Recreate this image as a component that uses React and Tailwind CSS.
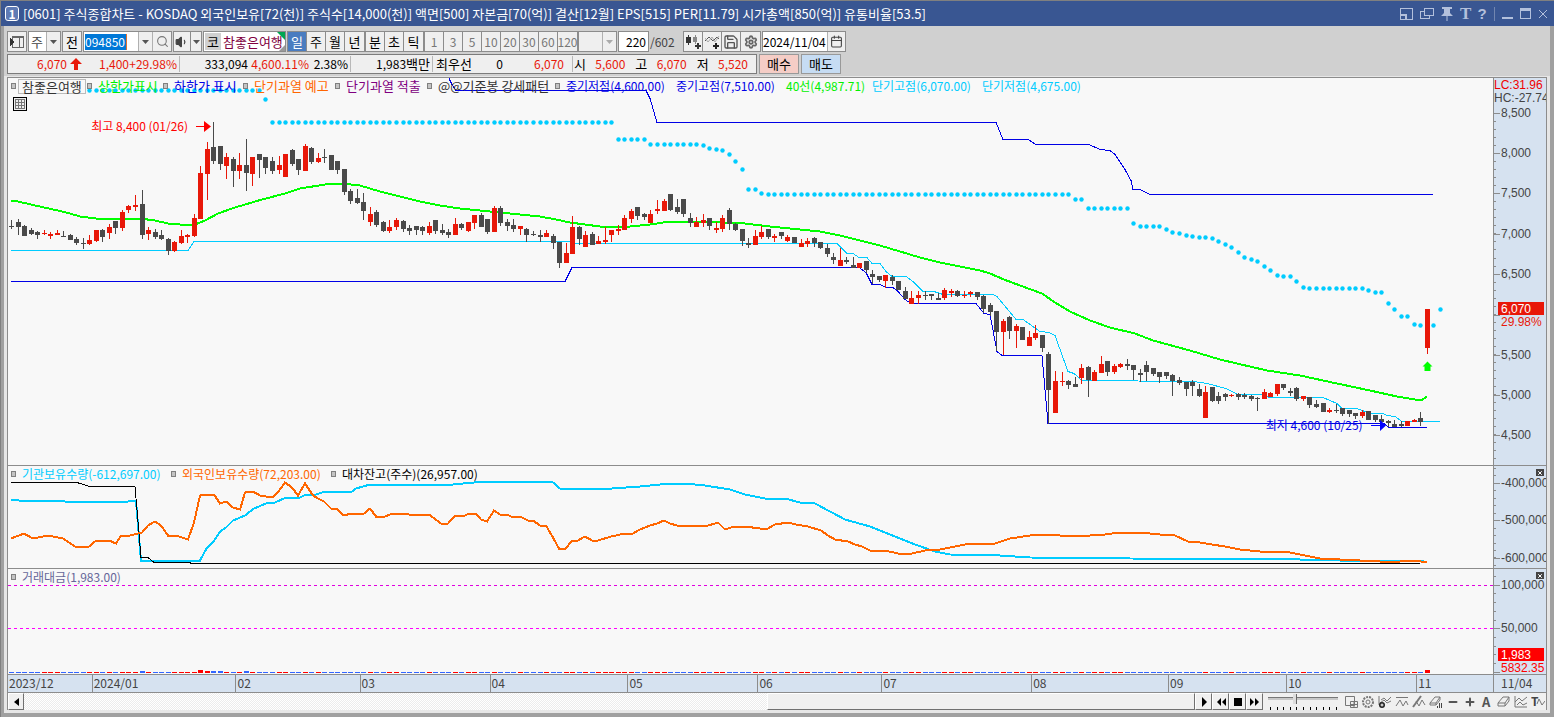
import { Search, Save, Settings, Calendar, Volume1, Minus, Plus, X } from 'lucide-react'
import clsx from 'clsx'

const RED = '#e81809'
const DARK = '#4a4a4a'
const CYAN = '#00ccff'
const BLUE = '#0000e6'
const STEP = 6.525

// [high, bodyTop, bodyBottom, low, rising]
const CANDLES = [
  [220, 226, 227, 229, 0], [219, 222, 227, 235, 0], [225, 226, 236, 236, 0], [228, 230, 234, 235, 0], [231, 232, 235, 239, 0],
  [230, 233, 234, 235, 1], [232, 234, 236, 239, 1], [230, 233, 235, 235, 1], [231, 236, 237, 237, 0], [234, 235, 240, 240, 0],
  [237, 239, 243, 245, 0], [238, 243, 244, 249, 0], [235, 240, 244, 245, 1], [230, 230, 241, 242, 1], [229, 230, 237, 242, 0],
  [224, 227, 233, 239, 1], [221, 221, 228, 234, 0], [210, 212, 228, 231, 1], [205, 206, 210, 213, 1], [195, 205, 207, 211, 1],
  [190, 204, 235, 239, 0], [227, 230, 234, 240, 1], [229, 232, 237, 239, 0], [230, 235, 239, 240, 0], [238, 239, 251, 255, 0],
  [241, 242, 251, 252, 1], [230, 236, 243, 244, 1], [234, 235, 237, 243, 1], [214, 218, 236, 237, 1], [166, 173, 219, 219, 1],
  [142, 149, 174, 200, 1], [122, 147, 161, 164, 0], [146, 146, 164, 170, 0], [153, 157, 166, 179, 1], [157, 159, 171, 187, 0],
  [153, 165, 171, 179, 1], [139, 165, 173, 191, 0], [157, 157, 174, 186, 1], [154, 154, 160, 178, 0], [157, 157, 168, 174, 0],
  [157, 161, 171, 174, 0], [156, 165, 170, 174, 1], [154, 154, 177, 177, 1], [149, 150, 164, 166, 0], [159, 159, 170, 175, 0],
  [144, 146, 171, 171, 1], [147, 148, 162, 164, 0], [153, 158, 162, 163, 1], [149, 157, 158, 163, 0], [155, 155, 170, 170, 0],
  [161, 161, 170, 174, 0], [169, 169, 192, 195, 0], [189, 191, 201, 204, 0], [189, 198, 203, 204, 0], [193, 202, 211, 220, 0],
  [207, 214, 222, 226, 1], [210, 212, 225, 227, 0], [221, 222, 231, 232, 0], [220, 227, 231, 233, 1], [218, 220, 227, 230, 1],
  [220, 221, 229, 232, 0], [225, 228, 231, 235, 0], [226, 226, 230, 235, 0], [226, 227, 231, 235, 0], [222, 226, 233, 235, 1],
  [220, 220, 231, 234, 0], [224, 230, 233, 235, 0], [229, 232, 235, 238, 0], [218, 224, 235, 235, 1], [223, 224, 228, 230, 0],
  [222, 222, 231, 232, 1], [215, 215, 223, 229, 1], [213, 215, 227, 227, 0], [219, 219, 232, 234, 0], [206, 208, 232, 232, 1],
  [206, 208, 223, 226, 0], [219, 222, 226, 231, 0], [219, 225, 229, 232, 0], [226, 226, 229, 235, 1], [228, 229, 235, 242, 0],
  [231, 234, 235, 236, 0], [230, 235, 237, 242, 0], [230, 233, 237, 237, 1], [234, 236, 243, 249, 0], [242, 242, 263, 268, 0],
  [243, 253, 263, 263, 1], [216, 227, 254, 254, 1], [226, 227, 239, 245, 0], [231, 235, 247, 247, 1], [232, 234, 245, 245, 0],
  [236, 241, 244, 244, 1], [227, 240, 242, 244, 1], [230, 230, 235, 242, 1], [225, 229, 231, 235, 1], [215, 218, 230, 230, 1],
  [209, 211, 219, 223, 1], [207, 207, 216, 220, 0], [213, 214, 217, 220, 0], [210, 214, 223, 223, 1], [200, 209, 211, 214, 1],
  [199, 201, 211, 211, 1], [194, 194, 210, 211, 0], [199, 207, 212, 214, 0], [199, 199, 214, 217, 0], [213, 218, 223, 227, 0],
  [217, 222, 227, 227, 1], [214, 220, 223, 227, 1], [218, 218, 226, 230, 0], [222, 228, 230, 233, 1], [215, 218, 229, 232, 1],
  [208, 210, 224, 230, 0], [223, 224, 230, 231, 0], [229, 229, 241, 246, 0], [238, 243, 245, 248, 0], [230, 236, 245, 245, 1],
  [226, 232, 237, 239, 1], [229, 229, 237, 239, 0], [234, 236, 238, 242, 1], [232, 232, 236, 239, 0], [235, 237, 241, 242, 1],
  [237, 237, 243, 243, 0], [239, 243, 247, 247, 1], [238, 241, 244, 247, 1], [237, 238, 243, 247, 0], [242, 242, 248, 249, 0],
  [244, 248, 254, 257, 0], [253, 257, 260, 264, 0], [248, 260, 266, 266, 1], [257, 260, 262, 264, 0], [257, 265, 268, 268, 0],
  [263, 263, 268, 268, 1], [261, 261, 270, 273, 0], [270, 274, 277, 284, 0], [276, 276, 280, 282, 0], [275, 275, 281, 288, 1],
  [275, 277, 281, 285, 0], [281, 281, 290, 290, 0], [287, 291, 299, 299, 0], [291, 298, 304, 304, 1], [291, 295, 298, 304, 1],
  [291, 295, 296, 300, 0], [294, 294, 296, 300, 0], [293, 298, 300, 300, 0], [288, 290, 298, 300, 1], [289, 291, 293, 297, 1],
  [290, 291, 296, 297, 0], [291, 295, 296, 298, 1], [291, 292, 294, 297, 1], [292, 292, 297, 300, 0], [295, 296, 309, 313, 0],
  [303, 305, 312, 316, 0], [311, 311, 332, 351, 0], [319, 321, 332, 355, 1], [316, 317, 331, 339, 0], [324, 326, 331, 348, 1],
  [327, 327, 340, 340, 0], [331, 337, 346, 346, 1], [325, 333, 338, 340, 1], [335, 335, 348, 352, 0], [352, 354, 390, 424, 0],
  [371, 381, 413, 413, 1], [372, 381, 382, 386, 1], [380, 381, 385, 389, 0], [377, 384, 387, 387, 0], [364, 368, 378, 384, 1],
  [366, 367, 380, 397, 0], [370, 372, 381, 381, 1], [356, 364, 373, 373, 1], [361, 361, 372, 376, 0], [364, 366, 372, 374, 1],
  [363, 364, 367, 368, 1], [359, 364, 366, 370, 0], [365, 365, 370, 380, 0], [369, 373, 375, 382, 0], [361, 365, 372, 381, 0],
  [368, 368, 374, 376, 0], [372, 372, 377, 383, 0], [372, 372, 376, 379, 0], [374, 375, 381, 396, 0], [377, 380, 383, 385, 0],
  [382, 382, 389, 396, 0], [380, 382, 386, 396, 0], [384, 389, 396, 397, 0], [386, 392, 418, 418, 1], [387, 387, 401, 402, 0],
  [392, 396, 401, 404, 0], [393, 394, 397, 401, 0], [394, 395, 396, 397, 1], [393, 394, 397, 400, 0], [393, 395, 397, 399, 0],
  [395, 396, 399, 401, 0], [397, 398, 399, 411, 0], [389, 392, 399, 399, 1], [392, 393, 397, 397, 1], [384, 384, 394, 396, 1],
  [384, 384, 388, 390, 0], [388, 391, 393, 396, 0], [387, 388, 399, 401, 0], [396, 396, 399, 401, 1], [397, 397, 405, 408, 0],
  [400, 404, 407, 408, 0], [403, 403, 412, 412, 0], [408, 410, 412, 413, 1], [404, 410, 411, 413, 0], [408, 408, 414, 416, 0],
  [410, 410, 414, 417, 0], [413, 413, 416, 419, 0], [410, 412, 416, 418, 1], [411, 411, 420, 420, 0], [415, 415, 420, 422, 0],
  [415, 419, 422, 425, 0], [420, 421, 423, 427, 0], [420, 424, 427, 427, 0], [421, 424, 426, 427, 0], [421, 421, 426, 426, 1],
  [419, 420, 422, 422, 1], [412, 418, 422, 426, 0], [309, 309, 348, 354, 1],
]

// short-term high: [first index, last index, y]
const DOTS = [
  [12, 38, 90], [39, 39, 99], [40, 92, 122], [93, 97, 139], [98, 105, 144], [106, 106, 145], [107, 107, 148], [108, 108, 149],
  [109, 109, 150], [110, 110, 154], [111, 111, 161], [112, 112, 169], [113, 114, 189], [115, 115, 193], [116, 162, 194],
  [163, 164, 199], [165, 171, 208], [172, 172, 223], [173, 176, 226], [177, 177, 229], [178, 178, 232], [179, 179, 233],
  [180, 180, 235], [181, 181, 236], [182, 183, 237], [184, 184, 238], [185, 185, 241], [186, 186, 244], [187, 187, 247],
  [188, 188, 252], [189, 189, 257], [190, 190, 259], [191, 191, 261], [192, 192, 266], [193, 193, 270], [194, 194, 275],
  [195, 196, 276], [197, 197, 281], [198, 198, 287], [199, 207, 288], [208, 208, 290], [209, 210, 292], [211, 211, 303],
  [212, 212, 309], [213, 214, 316], [215, 215, 324], [216, 218, 325], [219, 219, 309],
]

const MA40 = '11,200 18,201 31,204 44,207 58,210 70,213 80,216 96,218 140,218 155,220 168,223 180,224 195,224 205,220 218,213 235,207 262,199 285,193 300,188 325,184 342,183 360,185 380,191 400,196 420,201 440,205 460,208 480,210 500,212 520,214 540,216 556,219 570,222 585,224 600,226 620,227 630,226 650,224 670,221 700,221 725,222 745,223 770,226 800,229 820,231 840,235 860,240 880,245 900,251 920,257 940,262 960,266 980,270 990,273 1004,279 1020,285 1042,293 1055,302 1070,311 1090,320 1110,327 1135,333 1153,340 1190,350 1220,359 1237,363 1267,370 1300,375 1337,383 1370,390 1397,396 1421,400 1427,396'
const SHORT_LOW = '11,250 188,250 194,241 569,241 576,243 837,243 847,253 853,253 859,257 867,257 872,263 880,263 886,271 892,276 906,276 913,281 923,291 934,291 943,294 993,294 997,296 1016,319 1023,319 1040,331 1049,332 1055,335 1068,371 1074,373 1082,380 1193,381 1200,382 1207,383 1226,388 1238,394 1260,394 1270,397 1323,397 1337,403 1342,408 1357,408 1370,413 1383,413 1387,415 1395,416 1402,421 1440,421'
const MID_LOW = '11,281 565,281 572,267 859,267 866,272 872,284 880,284 886,287 893,287 898,291 905,299 911,303 976,303 984,313 990,314 997,351 1002,355 1042,355 1048,423 1384,423 1389,427 1427,427'
const MID_HIGH = '449,78 452,84 456,90 646,90 650,98 657,122 996,122 1003,139 1028,139 1036,144 1089,144 1100,149 1110,150 1115,154 1125,169 1131,180 1133,189 1140,189 1150,194 1433,194'

const FOREIGN = '11,538 24,533 31,537 38,537 48,535 63,538 75,546 89,546 95,541 109,540 116,543 121,535 130,535 142,532 148,525 155,521 161,525 168,535 176,535 188,539 194,522 200,495 209,494 214,494 220,503 226,501 233,507 240,509 245,492 253,491 260,495 272,497 277,493 285,482 292,487 298,495 305,483 313,495 318,498 324,501 331,508 337,508 343,515 352,513 364,513 370,508 376,516 385,516 390,514 402,513 409,514 429,514 441,523 448,523 455,515 463,516 469,513 476,513 481,519 487,521 494,510 500,514 507,514 513,517 520,516 528,520 533,520 540,525 546,525 553,537 559,548 566,548 572,540 578,540 585,536 592,540 598,540 611,536 625,533 633,533 640,529 650,525 657,523 664,520 670,523 680,526 692,525 705,526 718,522 725,529 731,527 745,526 760,528 768,528 775,524 788,522 796,524 808,526 821,530 828,535 835,539 848,541 855,544 862,546 870,550 885,550 898,553 912,553 925,550 940,549 955,546 970,543 985,544 995,543 1010,538 1030,535 1045,534 1060,535 1090,535 1105,534 1120,532 1140,532 1160,534 1175,535 1188,541 1200,542 1212,544 1225,546 1240,549 1260,551 1285,551 1300,554 1320,558 1340,559 1360,560 1380,561 1400,561 1415,560 1427,562'
const INSTITUTION = '11,499 19,500 50,500 65,501 128,501 136,500 141,560 200,560 207,547 213,542 220,531 226,527 233,520 245,515 254,508 266,503 275,502 286,497 300,497 306,494 316,494 325,491 352,491 356,488 370,484 453,484 474,482 476,481 546,481 553,482 560,488 612,488 640,486 660,484 685,483 705,485 730,489 745,494 765,498 785,498 800,502 815,503 830,511 845,519 870,526 895,536 915,544 935,551 950,554 1000,555 1030,557 1130,558 1300,559 1340,560 1421,560 1427,562'
const LENDING = '11,482 76,482 81,483 89,486 135,486 141,557 148,557 154,562 190,562 191,563 1420,563'

const TALL_BARS = { 20: 2, 29: 3, 30: 2, 31: 2, 32: 2, 36: 2, 217: 3 }

const MONTHS = [
  ['2023/12', 84], ['2024/01', 144], ['02', 124], ['03', 130], ['04', 138], ['05', 130],
  ['06', 124], ['07', 150], ['08', 137], ['09', 118], ['10', 130], ['11', 76],
]

const columnX = (i) => Math.round(11 + STEP * i)

function Caret({ className }) {
  return (
    <svg width="7" height="4" viewBox="0 0 7 4" className={clsx('pointer-events-none shrink-0', className)}>
      <path d="M0 0h7L3.500 4z" fill="currentColor" />
    </svg>
  )
}

function ToolButton({ label, active, width = 'w-[19px]', className, children }) {
  return (
    <button
      aria-label={label}
      className={clsx(
        'flex h-full shrink-0 items-center justify-center whitespace-nowrap',
        active ? 'bg-[#4a7cc0] text-white' : 'bg-[#efefef]',
        width,
        className,
      )}
    >
      {children}
    </button>
  )
}

function Group({ className, children }) {
  return (
    <div className={clsx('flex h-[21px] shrink-0 divide-x divide-[#8c8c8c] border border-[#8c8c8c]', className)}>
      {children}
    </div>
  )
}

function TitleBar() {
  return (
    <header className="flex h-[25px] items-center bg-[#395692] pl-1 text-white">
      <span className="flex h-[15px] w-[14px] items-center justify-center rounded-[3px] border border-white bg-[#5f7bb5] text-[12px] font-bold">1</span>
      <h1 className="ml-1 min-w-0 flex-1 text-[13px] whitespace-nowrap">
        [0601] 주식종합차트 - KOSDAQ 외국인보유[72(천)] 주식수[14,000(천)] 액면[500] 자본금[70(억)] 결산[12월] EPS[515] PER[11.79] 시가총액[850(억)] 유통비율[53.5]
      </h1>
      <div className="flex shrink-0 items-center gap-[7px] pr-[6px] text-[#b3c0dc]">
        <button aria-label="축소">
          <svg width="13" height="13" viewBox="0 0 13 13" fill="none" stroke="currentColor" shapeRendering="crispEdges">
            <path d="M.5 1.500h12v11H.5z M.5 1h12" /><path d="M.5 7.500h5v5" strokeWidth="2" />
          </svg>
        </button>
        <button aria-label="복제">
          <svg width="14" height="13" viewBox="0 0 14 13" fill="none" stroke="currentColor" shapeRendering="crispEdges">
            <path d="M4.500 1.500h9v7h-9z M4 1h10 M4 4.500H.5v7h9V9 M.5 11h9" />
          </svg>
        </button>
        <button aria-label="고정">
          <svg width="12" height="14" viewBox="0 0 12 14" fill="currentColor">
            <path d="M1 0h10v2H9v4l3 3H0l3-3V2H1z M5.500 9h1v5h-1z" />
          </svg>
        </button>
        <button aria-label="글꼴" className="w-[10px] font-['Liberation_Serif',serif] text-[17px] leading-none font-bold">T</button>
        <button aria-label="도움말" className="w-[10px] font-['Liberation_Sans',sans-serif] text-[15px] leading-none font-bold">?</button>
        <span className="h-[14px] w-px bg-[#7286b0]" />
        <button aria-label="최소화">
          <svg width="11" height="12" viewBox="0 0 11 12" fill="currentColor" shapeRendering="crispEdges"><path d="M0 9h11v2H0z" /></svg>
        </button>
        <button aria-label="최대화">
          <svg width="11" height="11" viewBox="0 0 11 11" fill="none" stroke="currentColor" shapeRendering="crispEdges">
            <path d="M.5 .5h10v10H.5z" /><path d="M0 1.500h11" strokeWidth="3" />
          </svg>
        </button>
        <button aria-label="닫기">
          <svg width="10" height="10" viewBox="0 0 10 10" fill="none" stroke="currentColor"><path d="M1 1l8 8M9 1L1 9" /></svg>
        </button>
      </div>
    </header>
  )
}

function Toolbar() {
  return (
    <div className="flex items-center">
      <Group>
        <ToolButton label="패널" width="w-[18px]">
          <svg width="14" height="13" viewBox="0 0 14 13" fill="none" shapeRendering="crispEdges">
            <path d="M2.500 1.500h11v11h-11z M2 2.500h12 M9.500 2v10" stroke="#666" /><path d="M0 3l5 4-5 4z" fill="#333" />
          </svg>
        </ToolButton>
      </Group>
      <div className="relative ml-px flex h-[21px] w-[33px] border border-[#8c8c8c] bg-white">
        <select aria-label="종목 구분" className="w-full appearance-none bg-transparent pl-[2px] text-[13px] text-[#444]">
          <option>주</option>
        </select>
        <span className="pointer-events-none absolute inset-y-0 right-0 flex w-[14px] items-center justify-center border-l border-[#b0b0b0] bg-[#efefef] text-[#555]"><Caret /></span>
      </div>
      <Group className="ml-px"><ToolButton width="w-[18px]">전</ToolButton></Group>
      <div className="ml-px flex h-[21px] w-[89px] border border-[#8c8c8c] bg-white">
        <label className="flex min-w-0 flex-1 items-center px-px">
          <span className="sr-only">종목코드</span>
          <input defaultValue="094850" className="h-4 w-[42px] border-r border-[#e07030] bg-[#0078d7] p-0 text-[12px] text-white outline-none" />
        </label>
        <ToolButton label="최근 종목" width="w-[14px]" className="border-l border-[#b0b0b0]"><Caret className="text-[#555]" /></ToolButton>
        <ToolButton label="종목 검색" className="border-l border-[#b0b0b0] text-[#777]"><Search size={13} /></ToolButton>
      </div>
      <Group className="ml-px">
        <ToolButton label="소리" width="w-[17px]"><Volume1 size={14} fill="#444" color="#444" /></ToolButton>
        <ToolButton label="소리 설정" width="w-[10px]"><Caret className="text-[#555]" /></ToolButton>
      </Group>
      <div className="relative ml-px flex h-[21px] w-[83px] items-center border border-[#8c8c8c] bg-white">
        <span className="ml-px flex h-[17px] w-4 shrink-0 items-center justify-center bg-[#d0d0d0]">코</span>
        <span className="ml-[2px] whitespace-nowrap text-[#800040]">참좋은여행</span>
        <svg width="8" height="19" viewBox="0 0 8 19" className="absolute top-0 right-0"><path d="M0 0h8v8z" fill="#00a651" /><path d="M8 13v6H2z" fill="#999" /></svg>
      </div>
      <Group className="ml-px">
        {['일', '주', '월', '년'].map((p) => (
          <ToolButton key={p} active={p === '일'}>{p}</ToolButton>
        ))}
      </Group>
      <Group>
        {['분', '초', '틱'].map((p) => <ToolButton key={p}>{p}</ToolButton>)}
      </Group>
      <Group className="text-[12px] text-[#777]">
        {['1', '3', '5', '10', '20', '30', '60', '120'].map((p) => <ToolButton key={p}>{p}</ToolButton>)}
      </Group>
      <div className="relative flex h-[21px] w-[39px] border border-[#8c8c8c] bg-[#efefef]">
        <select aria-label="주기" disabled className="w-full appearance-none bg-transparent" />
        <span className="pointer-events-none absolute inset-y-0 right-0 flex w-[14px] items-center justify-center border-l border-[#b0b0b0] text-[#aaa]"><Caret /></span>
      </div>
      <input aria-label="봉 개수" defaultValue="220" className="ml-px h-[21px] w-[31px] border border-[#8c8c8c] bg-white p-0 pr-[2px] text-right text-[12px]" />
      <span className="w-[34px] pl-px text-[12px] text-[#444]">/602</span>
      <Group>
        <ToolButton label="봉 유형">
          <svg width="15" height="14" viewBox="0 0 15 14" shapeRendering="crispEdges" fill="#333">
            <path d="M0 2h5v6H0z M2 0h1v10H2z M11 8h2v6h-2z M9 10h6v2H9z" /><path d="M7 2h4v5H7z M9 0h1v9H9z" fill="#888" />
          </svg>
        </ToolButton>
        <ToolButton label="지표 추가">
          <svg width="15" height="14" viewBox="0 0 15 14" fill="none">
            <path d="M0 6l4-4 4 4 4-4 2 2" stroke="#555" /><path d="M0 3l3 4 4-5 3 5 4-6" stroke="#aaa" /><path d="M11 8v6M8 11h6" stroke="#222" strokeWidth="2" />
          </svg>
        </ToolButton>
        <ToolButton label="저장" className="text-[#555]"><Save size={16} /></ToolButton>
        <ToolButton label="설정" className="text-[#666]"><Settings size={14} strokeWidth={3} /></ToolButton>
      </Group>
      <div className="ml-px flex h-[21px] w-[84px] border border-[#8c8c8c] bg-white">
        <input aria-label="기준일" defaultValue="2024/11/04" className="min-w-0 flex-1 p-0 text-[12px]" />
        <ToolButton label="달력" width="w-[18px]" className="border-l border-[#b0b0b0] text-[#444]"><Calendar size={13} /></ToolButton>
      </div>
    </div>
  )
}

function QuoteBar() {
  return (
    <div className="mt-[2px] flex h-5 items-center gap-[2px]">
      <div className="flex h-full items-center divide-x divide-[#b8b8b8] border border-[#7c7c7c] bg-[#efefef] text-right text-[12px] text-[#e81809]">
        <div className="flex w-[172px] items-center pr-[2px]">
          <span className="w-[59px]">6,070</span>
          <svg width="14" height="12" viewBox="0 0 14 12" className="ml-[2px]"><path d="M7 0l6 6H9v6H5V6H1z" fill={RED} /></svg>
          <span className="w-[46px]">1,400</span>
          <span className="flex-1">+29.98%</span>
        </div>
        <div className="flex w-[171px] items-center pr-[2px]">
          <span className="w-[68px] text-black">333,094</span>
          <span className="w-[61px]">4,600.11%</span>
          <span className="flex-1 text-black">2.38%</span>
        </div>
        <div className="w-[82px] pr-[2px] text-black">1,983<span className="text-[13px]">백만</span></div>
        <div className="flex w-[140px] pr-2">
          <span className="pl-[3px] text-[13px] text-black">최우선</span>
          <span className="w-[31px] text-black">0</span>
          <span className="flex-1">6,070</span>
        </div>
        <div className="flex w-[183px] pr-2">
          <span className="pl-px text-[13px] text-black">시</span><span className="flex-1">5,600</span>
          <span className="ml-[10px] text-[13px] text-black">고</span><span className="flex-1">6,070</span>
          <span className="ml-[10px] text-[13px] text-black">저</span><span className="flex-1">5,520</span>
        </div>
      </div>
      <button className="h-full w-10 border border-[#999] bg-[#f5cdc6]">매수</button>
      <button className="h-full w-10 border border-[#999] bg-[#c6dcf3]">매도</button>
    </div>
  )
}

function Bullet() {
  return <span className="h-[6px] w-[5px] shrink-0 border border-[#808080] bg-[#c4c4c4]" />
}

function Legend({ items }) {
  return (
    <ul className="absolute top-0 left-[3px] flex whitespace-nowrap">
      {items.map(({ text, className, bullet = true, boxed }) => (
        <li key={text} className={clsx('flex h-4 items-center', className)}>
          {bullet && <Bullet />}
          <span className={clsx(bullet && (boxed ? 'ml-[2px] border border-[#bbb] px-[3px] leading-[13px]' : 'ml-[6px]'))}>{text}</span>
        </li>
      ))}
    </ul>
  )
}

function Axis({ top, height, ticks, minor, children, closable }) {
  return (
    <div className="relative w-[53px] shrink-0 border-l border-[#8c8c8c] bg-[#d6e2f0]">
      <svg
        width="100%"
        height={height}
        viewBox={`1494 ${top} 52 ${height}`}
        preserveAspectRatio="xMinYMin"
        className="block font-['Liberation_Sans',sans-serif] text-[12px]"
      >
        <g stroke="#8c8c8c" shapeRendering="crispEdges">
          {minor.map((y) => <line key={y} x1="1494" x2="1496" y1={y + 0.5} y2={y + 0.5} />)}
          {ticks.map(([, y]) => <line key={y} x1="1494" x2="1500" y1={y + 0.5} y2={y + 0.5} />)}
        </g>
        {ticks.map(([label, y]) => label && <text key={y} x="1501" y={y + 4} fill="#444">{label}</text>)}
        {children}
      </svg>
      {closable && (
        <button aria-label="닫기" className="absolute top-[3px] right-[2px] flex h-[7px] w-2 items-center justify-center bg-[#444] text-white">
          <X size={6} strokeWidth={4} />
        </button>
      )}
    </div>
  )
}

function range(from, to, step) {
  const out = []
  for (let y = from; y < to; y += step) out.push(Math.round(y))
  return out
}

function Line({ points, color, width = 1 }) {
  return <polyline points={points} fill="none" stroke={color} strokeWidth={width} transform="translate(0 .5)" shapeRendering="crispEdges" />
}

function PricePanel() {
  return (
    <section className="flex border-b border-[#8c8c8c]">
      <div className="relative min-w-0 flex-1">
        <svg width="100%" height="387" viewBox="8 78 1485 387" preserveAspectRatio="none" className="block">
          <Line points={MA40} color="#00ff00" width={2} />
          <Line points={SHORT_LOW} color={CYAN} />
          <Line points={MID_LOW} color={BLUE} />
          <Line points={MID_HIGH} color={BLUE} />
          <g fill={CYAN}>
            {DOTS.flatMap(([a, b, y]) =>
              Array.from({ length: b - a + 1 }, (_, k) => <circle key={a + k} cx={columnX(a + k) + 0.5} cy={y + 0.5} r="2.200" />)
            )}
          </g>
          <g shapeRendering="crispEdges">
            {CANDLES.map(([high, top, bottom, low, up], i) => (
              <g key={i} fill={up ? RED : DARK}>
                <rect x={columnX(i)} y={high} width="1" height={low - high} />
                <rect x={columnX(i) - 2} y={top} width="5" height={bottom - top} />
              </g>
            ))}
          </g>
          <path d="M196 126h8v-5l7 5.500-7 5.500v-5h-8z" fill="#f00" />
          <path d="M1371 425h9v-5l6 5.500-6 5.500v-5h-9z" fill="#00f" />
          <path d="M1427.500 361.500l5 5h-2v4.500h-6v-4.500h-2z" fill="#00ff00" />
        </svg>
        <Legend
          items={[
            { text: '참좋은여행', className: 'w-[76px] text-[#333]', boxed: true },
            { text: '상한가표시', className: 'w-[76px] text-[#00f000]' },
            { text: '하한가 표시', className: 'w-20 text-[#0000e6]' },
            { text: '단기과열 예고', className: 'w-[92px] text-[#ff6600]' },
            { text: '단기과열 적출', className: 'w-[92px] text-[#800080]' },
            { text: '@@기준봉 강세패턴', className: 'w-32 text-[#333]' },
            { text: '중기저점(4,600.00)', className: 'w-[121px] text-[12px] text-[#0000e6]' },
            { text: '중기고점(7,510.00)', className: 'w-[110px] text-[12px] text-[#0000e6]', bullet: false },
            { text: '40선(4,987.71)', className: 'w-[86px] text-[12px] text-[#00f000]', bullet: false },
            { text: '단기고점(6,070.00)', className: 'w-[110px] text-[12px] text-[#00ccff]', bullet: false },
            { text: '단기저점(4,675.00)', className: 'text-[12px] text-[#00ccff]', bullet: false },
          ]}
        />
        <button aria-label="데이터 표" className="absolute top-[19px] left-[5px] flex h-[14px] w-[14px] items-center justify-center border border-black bg-[#eee]">
          <svg width="10" height="10" viewBox="0 0 10 10" fill="none" stroke="#777" shapeRendering="crispEdges">
            <path d="M.5 .5h9v9h-9z M.5 3.500h9 M.5 6.500h9 M3.500 .5v9 M6.500 .5v9" />
          </svg>
        </button>
        <span className="absolute top-10 left-[5.600%] text-[12px] whitespace-nowrap text-[#f00]">최고 8,400 (01/26)</span>
        <span className="absolute top-[339px] left-[84.700%] text-[12px] whitespace-nowrap text-[#0000e6]">최저 4,600 (10/25)</span>
      </div>
      <Axis
        top={78}
        height={387}
        minor={range(121, 460, 8.03)}
        ticks={[['8,500', 113], ['8,000', 153], ['7,500', 193], ['7,000', 234], ['6,500', 274], ['', 315], ['5,500', 355], ['5,000', 395], ['4,500', 435]]}
      >
        <text x="1494" y="89" fill="#f00000">LC:31.96</text>
        <text x="1494" y="102" fill="#444">HC:-27.74</text>
        <rect x="1498" y="302" width="46" height="13" fill={RED} />
        <text x="1501" y="313" fill="#fff">6,070</text>
        <text x="1501" y="326" fill={RED}>29.98%</text>
      </Axis>
    </section>
  )
}

function HoldingsPanel() {
  return (
    <section className="flex border-b border-[#8c8c8c]">
      <div className="relative min-w-0 flex-1">
        <svg width="100%" height="102" viewBox="8 466 1485 102" preserveAspectRatio="none" className="block">
          <Line points={INSTITUTION} color={CYAN} width={2} />
          <Line points={LENDING} color="#000" />
          <Line points={FOREIGN} color="#ff6600" width={2} />
        </svg>
        <Legend
          items={[
            { text: '기관보유수량(-612,697.00)', className: 'w-40 text-[12px] text-[#00ccff]' },
            { text: '외국인보유수량(72,203.00)', className: 'w-40 text-[12px] text-[#ff6600]' },
            { text: '대차잔고(주수)(26,957.00)', className: 'text-[12px] text-black' },
          ]}
        />
      </div>
      <Axis top={466} height={102} closable minor={range(468, 566, 7.45)} ticks={[['-400,000', 483], ['-500,000', 520], ['-600,000', 558]]} />
    </section>
  )
}

function TurnoverPanel() {
  return (
    <section className="flex border-b border-[#8c8c8c]">
      <div className="relative min-w-0 flex-1">
        <svg width="100%" height="105" viewBox="8 569 1485 105" preserveAspectRatio="none" className="block">
          <g shapeRendering="crispEdges">
            <line x1="8" x2="1493" y1="585.500" y2="585.500" stroke="#e000e0" strokeDasharray="3 3" />
            <line x1="8" x2="1493" y1="628.500" y2="628.500" stroke="#ff00ff" strokeDasharray="3 3" />
            {CANDLES.map(([, , , , up], i) => {
              const h = TALL_BARS[i] || 1
              return <rect key={i} x={columnX(i) - 2} y={673 - h} width="5" height={h} fill={up ? '#f00' : '#3366ff'} />
            })}
          </g>
        </svg>
        <Legend items={[{ text: '거래대금(1,983.00)', className: 'text-[12px] text-[#666699]' }]} />
      </div>
      <Axis top={569} height={105} closable minor={range(576, 672, 8.7)} ticks={[['100,000', 585], ['50,000', 628], ['', 672]]}>
        <rect x="1498" y="648" width="46" height="13" fill="#f00" />
        <text x="1501" y="659" fill="#fff">1,983</text>
        <text x="1501" y="672" fill="#f00">5832.35</text>
      </Axis>
    </section>
  )
}

function DateAxis() {
  return (
    <div className="flex h-[18px] border-b border-[#8c8c8c] bg-[#d6e2f0] text-[12px] text-[#444]">
      <div className="flex min-w-0 flex-1 divide-x divide-[#8c8c8c]">
        {MONTHS.map(([label, span]) => (
          <div key={label} className="min-w-0 basis-0 pl-px" style={{ flexGrow: span }}>{label}</div>
        ))}
      </div>
      <div className="w-[53px] border-l border-[#8c8c8c] pl-[7px]">11/04</div>
    </div>
  )
}

const RAISED = 'flex h-[17px] items-center justify-center border border-r-[#707070] border-b-[#707070] border-t-white border-l-white bg-[#f0f0f0]'

const PLAYBACK = [
  ['재생', 'M4 1l5 5-5 5z'],
  ['뒤로', 'M6 2v8L2 6z M11 2v8L7 6z'],
  ['정지', 'M2 2h8v8H2z'],
  ['앞으로', 'M1 2l4 4-4 4z M6 2l4 4-4 4z'],
]

const TOOLS = [
  ['새 창', <path key="a" d="M1.500 1.500h9v9h-9z M6.500 6.500h7v6h-7z M10 7v5 M7 9.500h6" />],
  ['환경', <><circle cx="7" cy="7" r="5" strokeWidth="2" strokeDasharray="2 1" /><circle cx="7" cy="7" r="2" /></>],
  ['지표', <><path d="M1 1v9 M3 5l3-2 3 3 4-4 M2 8l4-3 3 3 4-2" /><circle cx="4" cy="10" r="3" fill="#222" stroke="none" /><path d="M2.500 10h3 M4 8.500v3" stroke="#fff" /></>],
  ['추세', <path key="a" d="M1 2.500h12 M1 11l4-6 3 6 3-5 2 4" />],
  ['분석', <><path d="M1 12L9 1" strokeWidth="2" /><path d="M4 6l3 5 3-6 3 5" /></>],
  ['전체 지우기', <><path d="M1 8l5-6h5l-4 6z M1 8v2h6V8 M7 10l4-5V2" /><path d="M8.500 13v-2 M10.500 13V8 M12.500 13V8" stroke="#444" /></>],
  ['축소', <Minus key="a" x="1" y="1" width="12" height="12" strokeWidth={4} stroke="#555" />],
  ['확대', <Plus key="a" x="1" y="1" width="12" height="12" strokeWidth={4} stroke="#555" />],
  ['자동', <text key="a" x="2" y="12" fontSize="13" fontWeight="bold" fill="#555" stroke="none">A</text>],
  ['지우개', <path key="a" d="M1 8l5-6h6l-4 6z M1 8v3h7V8 M8 11l4-5V2" />],
  ['보조선', <path key="a" d="M1 1v11h12 M1 7l4-4 3 3 5-4 M3 10l3-3 3 3 4-2" />],
  ['문자', <><text x="0" y="11" fontSize="12" fontWeight="bold" fill="#444" stroke="none">T</text><path d="M6 9l2-5 3 6 3-4" /></>],
]

function BottomBar() {
  return (
    <div className="flex h-[17px] bg-[#f0f0f0]">
      <button aria-label="왼쪽으로" className={clsx(RAISED, 'w-4 shrink-0')}>
        <svg width="5" height="8" viewBox="0 0 5 8"><path d="M5 0v8L0 4z" /></svg>
      </button>
      <div className="flex min-w-0 flex-1 [background:repeating-conic-gradient(#fff_0_25%,#ececec_0_50%)_0_0/2px_2px]">
        <div className="basis-0" style={{ flexGrow: 744 }} />
        <div className={clsx(RAISED, 'basis-0')} style={{ flexGrow: 427 }} />
      </div>
      {PLAYBACK.map(([label, d]) => (
        <button key={label} aria-label={label} className={clsx(RAISED, 'w-[17px] shrink-0')}>
          <svg width="12" height="12" viewBox="0 0 12 12"><path d={d} /></svg>
        </button>
      ))}
      <div className="ml-[5px] w-[70px] shrink-0">
        <input
          type="range"
          aria-label="재생 속도"
          defaultValue="38"
          className="block h-[10px] w-full appearance-none bg-transparent [&::-webkit-slider-runnable-track]:h-[3px] [&::-webkit-slider-runnable-track]:border-t [&::-webkit-slider-runnable-track]:border-[#777] [&::-webkit-slider-runnable-track]:bg-[#c8c8c8] [&::-webkit-slider-thumb]:-mt-1 [&::-webkit-slider-thumb]:h-[10px] [&::-webkit-slider-thumb]:w-[4px] [&::-webkit-slider-thumb]:appearance-none [&::-webkit-slider-thumb]:border-r [&::-webkit-slider-thumb]:border-[#666] [&::-webkit-slider-thumb]:bg-[#ddd]"
        />
        <div className="mt-1 ml-[2px] flex h-[3px] w-[67px] justify-between">
          {Array.from({ length: 11 }, (_, i) => <span key={i} className="w-px bg-black" />)}
        </div>
      </div>
      <div className="ml-[6px] flex shrink-0 items-center gap-[3px] pr-px">
        {TOOLS.map(([label, shape]) => (
          <button key={label} aria-label={label}>
            <svg width="14" height="14" viewBox="0 0 14 14" fill="none" stroke="#777">{shape}</svg>
          </button>
        ))}
      </div>
    </div>
  )
}

export default function App() {
  return (
    <div className="min-h-screen border-t border-l border-[#808080] bg-[#a0a0a0] pb-1 font-['Noto_Sans_CJK_KR',sans-serif] text-[13px] leading-4">
      <TitleBar />
      <main className="mr-1 ml-[3px] bg-[#d0d0d0]">
        <div className="px-[3px] pt-[5px] pb-[2px]">
          <Toolbar />
          <QuoteBar />
        </div>
        <div className="bg-[#e6e6e6] px-[3px] pt-px pb-[3px]">
          <div className="border-x border-t border-[#8c8c8c] bg-[#f8f8f8]">
            <PricePanel />
            <HoldingsPanel />
            <TurnoverPanel />
            <DateAxis />
            <BottomBar />
          </div>
        </div>
      </main>
    </div>
  )
}
